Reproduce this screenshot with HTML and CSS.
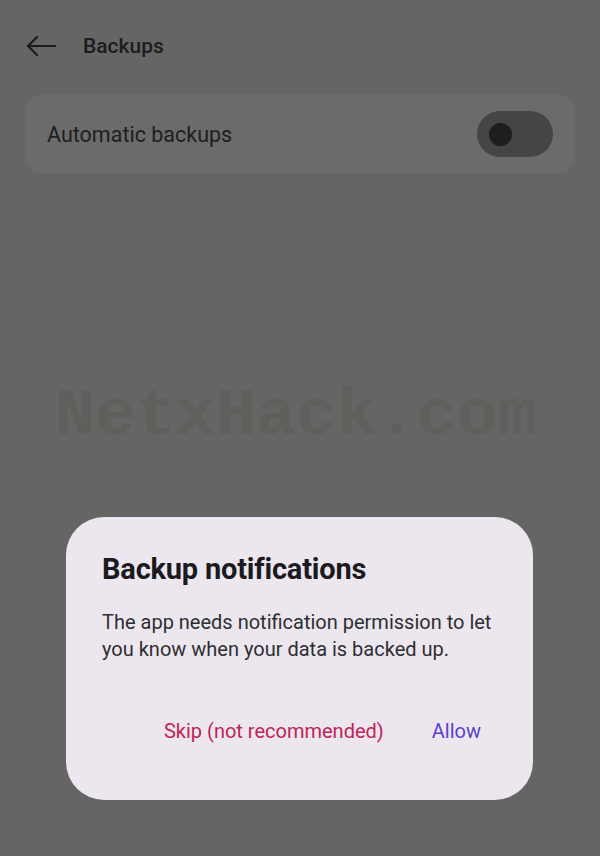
FILE: index.html
```html
<!DOCTYPE html>
<html>
<head>
<meta charset="utf-8">
<link rel="stylesheet" href="styles.css">
</head>
<body>
<div class="screen">
  <header class="topbar">
    <svg class="back" width="30" height="22" viewBox="0 0 30 22"><path d="M29 11H2M11 2L2 11L11 20" fill="none" stroke="#1c1c1c" stroke-width="2.2" stroke-linecap="round" stroke-linejoin="round"/></svg>
    <h1 class="title">Backups</h1>
  </header>
  <div class="card">
    <span class="card-label">Automatic backups</span>
    <span class="toggle"><span class="knob"></span></span>
  </div>
  <div class="watermark">NetxHack.com</div>
  <div class="dialog">
    <h2 class="dlg-title">Backup notifications</h2>
    <p class="dlg-body">The app needs notification permission to let you know when your data is backed up.</p>
    <div class="dlg-actions">
      <span class="btn skip">Skip (not recommended)</span>
      <span class="btn allow">Allow</span>
    </div>
  </div>
</div>
</body>
</html>
```
FILE: styles.css
```css
html, body {
  margin: 0;
  padding: 0;
}
body {
  width: 600px;
  height: 856px;
  background: #656565;
  font-family: Roboto, "Noto Sans", sans-serif;
  overflow: hidden;
}
.screen {
  position: relative;
  width: 600px;
  height: 856px;
  display: flex;
  flex-direction: column;
}
.topbar {
  display: flex;
  align-items: center;
  height: 28px;
  margin-top: 32px;
  padding-left: 26px;
}
.back {
  display: block;
}
.title {
  margin: 0 0 0 27px;
  font-size: 21px;
  font-weight: 500;
  color: #1c1c1c;
  line-height: 28px;
}
.card {
  margin: 35px 25px 0 25px;
  height: 78px;
  border-radius: 16px;
  background: #6b6b6b;
  display: flex;
  align-items: center;
  justify-content: space-between;
  padding: 0 22px 0 22px;
}
.card-label {
  font-size: 21.5px;
  color: #1e1e1e;
}
.toggle {
  width: 76px;
  height: 46px;
  border-radius: 23px;
  background: #454545;
  display: flex;
  align-items: center;
  padding-left: 12px;
  box-sizing: border-box;
}
.knob {
  width: 23px;
  height: 23px;
  border-radius: 50%;
  background: #1e1e1e;
}
.watermark {
  margin-top: 207px;
  padding-left: 55px;
  font-family: "Liberation Mono", "DejaVu Sans Mono", monospace;
  font-weight: bold;
  font-size: 67px;
  line-height: 72px;
  color: #5e605b;
}
.dialog {
  position: absolute;
  left: 66px;
  top: 517px;
  width: 467px;
  height: 283px;
  box-sizing: border-box;
  background: #ece7ee;
  border-radius: 38px;
  padding: 33px 30px 0 36px;
}
.dlg-title {
  margin: 0;
  font-size: 29px;
  font-weight: 700;
  color: #1b1b1f;
  line-height: 38px;
  letter-spacing: -0.2px;
}
.dlg-body {
  margin: 21px 0 0 0;
  font-size: 20px;
  line-height: 27px;
  color: #2e2e32;
}
.dlg-actions {
  display: flex;
  justify-content: flex-end;
  gap: 48px;
  margin-top: 55px;
  padding-right: 22px;
}
.btn {
  font-size: 20px;
  line-height: 26px;
}
.skip {
  color: #c0245a;
}
.allow {
  color: #5b3fd0;
}
```
